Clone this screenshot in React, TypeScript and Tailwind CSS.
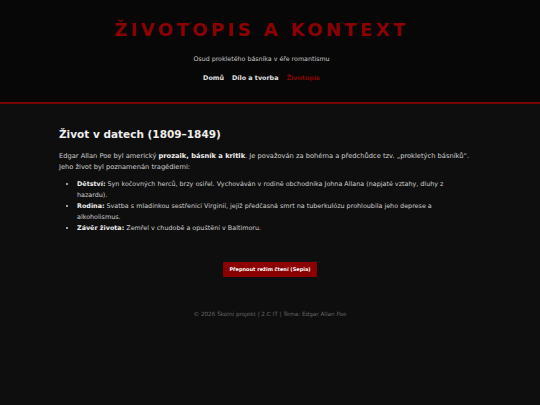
import React from 'react';

const font = { fontFamily: '"DejaVu Sans", Verdana, sans-serif' };

const App: React.FC = () => {
  return (
    <div className="min-h-[405px] bg-[#0e0e0e] text-[#cfcfcf]" style={font}>
      <header className="bg-[#070707] border-b-2 border-[#7a0000] pt-[15px] pb-[19px] pr-[17px] text-center">
        <h1 className="text-[18px] leading-[30px] font-bold tracking-[3.4px] text-[#8b0000]">ŽIVOTOPIS A KONTEXT</h1>
        <p className="mt-[9px] text-[6.3px] leading-[10px] text-[#c8c8c8]">Osud prokletého básníka v éře romantismu</p>
        <nav className="mt-[9px] flex justify-center gap-[8px] text-[6.4px] leading-[10px] font-bold">
          <a className="text-[#e0e0e0]">Domů</a>
          <a className="text-[#e0e0e0]">Dílo a tvorba</a>
          <a className="text-[#8b0000]">Životopis</a>
        </nav>
      </header>

      <main className="px-[59px] pt-[22px]">
        <h2 className="text-[10.5px] leading-[16px] font-bold text-[#eeeeee]">Život v datech (1809–1849)</h2>
        <p className="mt-[9px] text-[6.7px] leading-[11px]">
          Edgar Allan Poe byl americký <b className="text-[#eeeeee]">prozaik, básník a kritik</b>. Je považován za bohéma a předchůdce tzv. „prokletých básníků“. Jeho život byl poznamenán tragédiemi:
        </p>
        <ul className="mt-[6px] pl-[18px] list-disc text-[6.4px] leading-[11px] pr-[10px]">
          <li><b className="text-[#eeeeee]">Dětství:</b> Syn kočovných herců, brzy osiřel. Vychováván v rodině obchodníka Johna Allana (napjaté vztahy, dluhy z hazardu).</li>
          <li><b className="text-[#eeeeee]">Rodina:</b> Svatba s mladinkou sestřenicí Virginií, jejíž předčasná smrt na tuberkulózu prohloubila jeho deprese a alkoholismus.</li>
          <li><b className="text-[#eeeeee]">Závěr života:</b> Zemřel v chudobě a opuštění v Baltimoru.</li>
        </ul>
        <div className="mt-[28px] flex justify-center">
          <button className="bg-[#8b0000] text-white text-[5px] font-bold px-[6px] h-[15px] leading-[15px] rounded-[1px]">Přepnout režim čtení (Sepia)</button>
        </div>
      </main>

      <footer className="mt-[33px] text-center text-[5.7px] leading-[8px] text-[#666666]">© 2026 Školní projekt | 2.C IT | Téma: Edgar Allan Poe</footer>
    </div>
  );
};

export default App;
